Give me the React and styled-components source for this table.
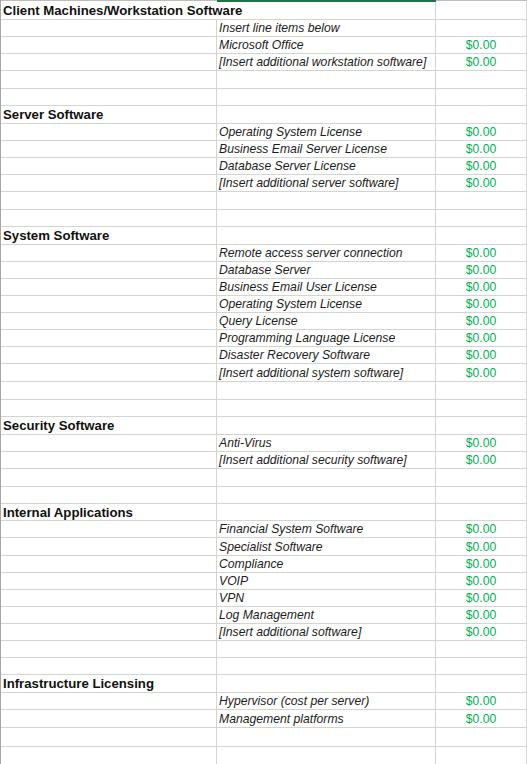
import React from 'react'
import styled, { createGlobalStyle } from 'styled-components'

const GlobalStyle = createGlobalStyle`
  html, body {
    margin: 0;
    padding: 0;
    background: #ffffff;
  }
  body {
    font-family: "Liberation Sans", Arial, sans-serif;
    overflow: hidden;
  }
`

const sections = [
    {
        title: 'Client Machines/Workstation Software',
        items: [
            { name: 'Insert line items below', price: null },
            { name: 'Microsoft Office', price: '$0.00' },
            { name: '[Insert additional workstation software]', price: '$0.00' },
        ],
    },
    {
        title: 'Server Software',
        items: [
            { name: 'Operating System License', price: '$0.00' },
            { name: 'Business Email Server License', price: '$0.00' },
            { name: 'Database Server License', price: '$0.00' },
            { name: '[Insert additional server software]', price: '$0.00' },
        ],
    },
    {
        title: 'System Software',
        items: [
            { name: 'Remote access server connection', price: '$0.00' },
            { name: 'Database Server', price: '$0.00' },
            { name: 'Business Email User License', price: '$0.00' },
            { name: 'Operating System License', price: '$0.00' },
            { name: 'Query License', price: '$0.00' },
            { name: 'Programming Language License', price: '$0.00' },
            { name: 'Disaster Recovery Software', price: '$0.00' },
            { name: '[Insert additional system software]', price: '$0.00' },
        ],
    },
    {
        title: 'Security Software',
        items: [
            { name: 'Anti-Virus', price: '$0.00' },
            { name: '[Insert additional security software]', price: '$0.00' },
        ],
    },
    {
        title: 'Internal Applications',
        items: [
            { name: 'Financial System Software', price: '$0.00' },
            { name: 'Specialist Software', price: '$0.00' },
            { name: 'Compliance', price: '$0.00' },
            { name: 'VOIP', price: '$0.00' },
            { name: 'VPN', price: '$0.00' },
            { name: 'Log Management', price: '$0.00' },
            { name: '[Insert additional software]', price: '$0.00' },
        ],
    },
    {
        title: 'Infrastructure Licensing',
        items: [
            { name: 'Hypervisor (cost per server)', price: '$0.00' },
            { name: 'Management platforms', price: '$0.00' },
        ],
    },
]

// row heights as the sheet shows them (zoomed rows are not all equal)
const rowHeights = [
    18, 17, 17, 17, 18, 17,
    18, 17, 17, 17, 17, 18, 17,
    18, 17, 17, 17, 17, 17, 17, 17, 18, 18, 17,
    18, 17, 17, 18, 17,
    17, 17, 18, 17, 17, 17, 17, 17, 17, 17,
    18, 17, 18, 19, 18,
]

const Sheet = styled.div`
  width: 527px;
  height: 764px;
  display: flex;
  flex-direction: column;
  border-left: 1px solid #a6a6a6;
  box-sizing: border-box;
  overflow: hidden;
`

const TopEdge = styled.div`
  display: grid;
  grid-template-columns: 216px 219px 1fr;
  height: 2px;
  flex: none;
`

const EdgePart = styled.div`
  box-sizing: border-box;
  height: 2px;
  background: ${p => (p.$active ? '#217346' : '#ffffff')};
  border-top: ${p => (p.$active ? 'none' : '1px solid #bdbdbd')};
`

const Row = styled.div`
  display: grid;
  grid-template-columns: 216px 219px 1fr;
  height: ${p => p.$h}px;
  flex: none;
`

const Cell = styled.div`
  box-sizing: border-box;
  display: flex;
  align-items: center;
  min-width: 0;
  padding: 0 2px;
  border-bottom: 1px solid #d4d4d4;
  border-right: ${p => (p.$spill ? 'none' : '1px solid #d4d4d4')};
  white-space: nowrap;
  overflow: visible;
  justify-content: ${p => (p.$center ? 'center' : 'flex-start')};
`

const Title = styled.span`
  font-size: 13.2px;
  font-weight: bold;
  color: #111111;
  position: relative;
`

const ItemName = styled.span`
  font-size: 12.2px;
  font-style: italic;
  color: #1c1c1c;
`

const Price = styled.span`
  font-size: 12.2px;
  color: #00b050;
`

function buildRows() {
    const rows = []
    sections.forEach((s, si) => {
        rows.push({ kind: 'title', text: s.title, spill: si === 0 })
        s.items.forEach(it => rows.push({ kind: 'item', text: it.name, price: it.price }))
        rows.push({ kind: 'blank' })
        rows.push({ kind: 'blank' })
    })
    return rows
}

export default function App() {
    const rows = buildRows()

    return (
        <>
            <GlobalStyle />
            <Sheet>
                <TopEdge>
                    <EdgePart />
                    <EdgePart $active />
                    <EdgePart />
                </TopEdge>
                {rows.map((r, i) => (
                    <Row key={i} $h={rowHeights[i] || 17}>
                        <Cell $spill={r.spill}>
                            {r.kind === 'title' && <Title>{r.text}</Title>}
                        </Cell>
                        <Cell>
                            {r.kind === 'item' && <ItemName>{r.text}</ItemName>}
                        </Cell>
                        <Cell $center>
                            {r.price && <Price>{r.price}</Price>}
                        </Cell>
                    </Row>
                ))}
            </Sheet>
        </>
    )
}
